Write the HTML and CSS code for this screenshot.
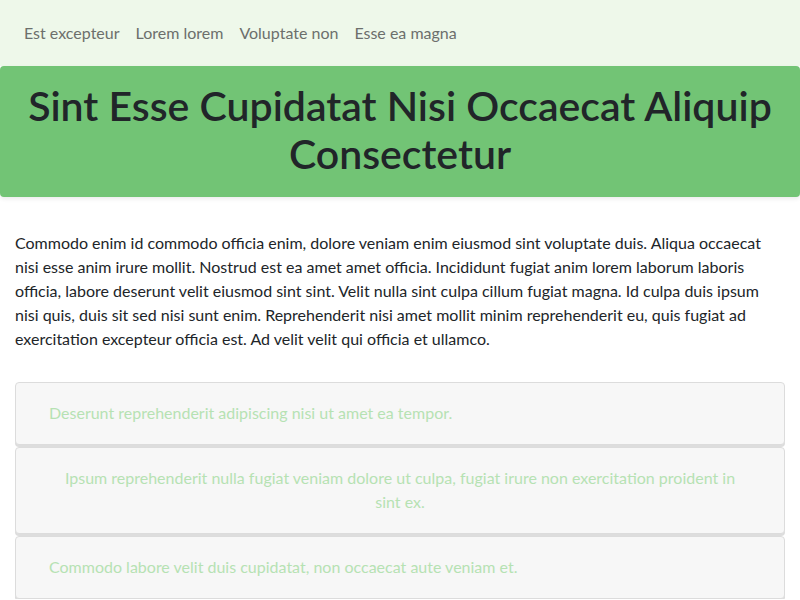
FILE: index.html
```html
<!DOCTYPE html>
<html>
<head>
<meta charset="utf-8">
<link rel="stylesheet" href="styles.css">
</head>
<body>
<nav class="nav">
  <a class="nav-link" href="#">Est excepteur</a>
  <a class="nav-link" href="#">Lorem lorem</a>
  <a class="nav-link" href="#">Voluptate non</a>
  <a class="nav-link" href="#">Esse ea magna</a>
</nav>
<header class="hero">
  <h1 class="hero-title">Sint Esse Cupidatat Nisi Occaecat Aliquip Consectetur</h1>
</header>
<main class="content">
  <p class="lead">Commodo enim id commodo officia enim, dolore veniam enim eiusmod sint voluptate duis. Aliqua occaecat nisi esse anim irure mollit. Nostrud est ea amet amet officia. Incididunt fugiat anim lorem laborum laboris officia, labore deserunt velit eiusmod sint sint. Velit nulla sint culpa cillum fugiat magna. Id culpa duis ipsum nisi quis, duis sit sed nisi sunt enim. Reprehenderit nisi amet mollit minim reprehenderit eu, quis fugiat ad exercitation excepteur officia est. Ad velit velit qui officia et ullamco.</p>
  <div class="cards">
    <div class="card">Deserunt reprehenderit adipiscing nisi ut amet ea tempor.</div>
    <div class="card card-center">Ipsum reprehenderit nulla fugiat veniam dolore ut culpa, fugiat irure non exercitation proident in sint ex.</div>
    <div class="card">Commodo labore velit duis cupidatat, non occaecat aute veniam et.</div>
  </div>
</main>
</body>
</html>
```

FILE: styles.css
```css
html, body {
  margin: 0;
  padding: 0;
}
body {
  font-family: Lato, "Open Sans", sans-serif;
  font-size: 16px;
  line-height: 24px;
  color: #212529;
  background: #ffffff;
}
.nav {
  display: flex;
  background: #eef8ea;
  padding: 13px 16px;
}
.nav-link {
  padding: 8px;
  color: #6c6f6c;
  text-decoration: none;
}
.hero {
  background: #72c475;
  border-radius: 4px;
  box-shadow: 0 2px 4px rgba(0, 0, 0, 0.08);
  padding: 16px 16px 19px;
}
.hero-title {
  margin: 0;
  text-align: center;
  font-size: 41px;
  line-height: 48px;
  font-weight: 600;
  color: #212529;
}
.content {
  padding: 34px 15px 0;
}
.lead {
  margin: 0 0 31px;
}
.cards {
  display: flex;
  flex-direction: column;
  gap: 2px;
}
.card {
  background: #f7f7f7;
  border: 1px solid #dcdcdc;
  border-radius: 4px;
  box-shadow: 0 2px 0 #dddddd;
  padding: 18px 33px 19px;
  color: #b6e2b3;
}
.card-center {
  text-align: center;
  padding-left: 44px;
  padding-right: 44px;
}
```
